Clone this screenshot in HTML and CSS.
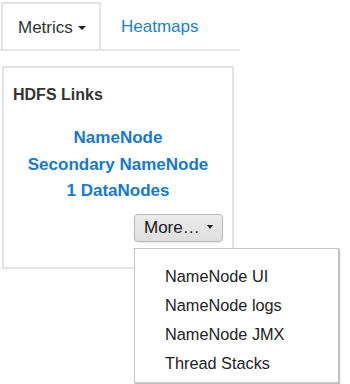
FILE: index.html
```html
<!DOCTYPE html>
<html>
<head>
<meta charset="utf-8">
<link rel="stylesheet" href="styles.css">
</head>
<body>
<div class="page">
<ul class="tabs">
  <li class="tab active"><span>Metrics</span><span class="caret"></span></li>
  <li class="tab"><a href="#">Heatmaps</a></li>
</ul>
<div class="panel">
  <h4 class="panel-title">HDFS Links</h4>
  <div class="links">
    <a href="#">NameNode</a>
    <a href="#">Secondary NameNode</a>
    <a href="#">1 DataNodes</a>
  </div>
  <div class="more-row">
    <div class="dropdown">
      <button class="btn">More…<span class="caret"></span></button>
      <ul class="dd-list">
        <li>NameNode UI</li>
        <li>NameNode logs</li>
        <li>NameNode JMX</li>
        <li>Thread Stacks</li>
      </ul>
    </div>
  </div>
</div>
</div>
</body>
</html>
```
FILE: styles.css
```css
* { box-sizing: border-box; }
html, body { height: 100%; }
body {
  margin: 0;
  font-family: "Liberation Sans", Arial, sans-serif;
  color: #333;
  background: #fff;
}
.page {
  min-height: 384px;
}
.tabs {
  list-style: none;
  margin: 0;
  padding: 2px 0 0 1px;
  width: 240px;
  display: flex;
  border-bottom: 2px solid #e6e6e6;
}
.tab {
  height: 47px;
  display: flex;
  align-items: center;
  font-size: 17px;
  padding-top: 2px;
}
.tab.active {
  width: 100px;
  border: 2px solid #e2e2e2;
  border-bottom: none;
  padding-left: 15px;
  color: #333;
}
.tab a {
  color: #1a80d6;
  text-decoration: none;
  padding-left: 20px;
}
.caret {
  display: inline-block;
  width: 0;
  height: 0;
  border-left: 4px solid transparent;
  border-right: 4px solid transparent;
  border-top: 4px solid #222;
  margin-left: 5px;
  vertical-align: middle;
}
.panel {
  margin: 15px 0 0 2px;
  width: 232px;
  height: 203px;
  border: 2px solid #e2e2e2;
  padding: 17px 9px 0 9px;
}
.panel-title {
  margin: 0;
  font-size: 16px;
  line-height: 20px;
  font-weight: bold;
  color: #333;
}
.links {
  margin-top: 20px;
  display: flex;
  flex-direction: column;
  align-items: center;
}
.links a {
  font-size: 17px;
  font-weight: bold;
  line-height: 26.5px;
  color: #1479d2;
  text-decoration: none;
}
.more-row {
  margin-top: 9px;
  display: flex;
  justify-content: flex-end;
}
.dropdown {
  position: relative;
  z-index: 5;
}
.btn {
  font-family: inherit;
  font-size: 17px;
  color: #1a1a1a;
  height: 28px;
  width: 89px;
  padding: 0 0 0 9px;
  text-align: left;
  border: 1px solid #b8b8b8;
  border-radius: 4px;
  background: linear-gradient(#ececec, #dedede);
  box-shadow: 0 1px 1px rgba(0,0,0,0.08);
  display: flex;
  align-items: center;
}
.btn .caret {
  margin-left: 7px;
  margin-top: -2px;
  border-left-width: 3px;
  border-right-width: 3px;
  border-top-width: 4px;
}
.dd-list {
  position: absolute;
  left: 0;
  top: 34px;
  width: 205px;
  height: 135px;
  margin: 0;
  padding: 13px 0 0 30px;
  list-style: none;
  background: #fff;
  border: 1px solid #c4c4c4;
  box-shadow: 1px 1px 1px rgba(0,0,0,0.25);
}
.dd-list li {
  font-size: 16.3px;
  line-height: 29px;
  color: #222;
  white-space: nowrap;
}
```
